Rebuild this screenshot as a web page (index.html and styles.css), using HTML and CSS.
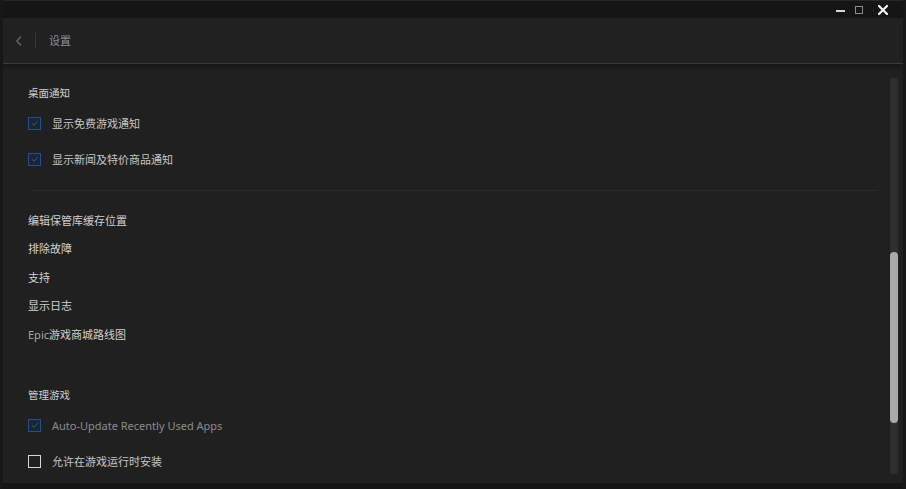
FILE: index.html
```html
<!DOCTYPE html>
<html lang="zh-CN">
<head>
<meta charset="utf-8">
<title>设置</title>
<link rel="stylesheet" href="styles.css">
</head>
<body>
<div class="window">
  <div class="titlebar">
    <div class="controls">
      <span class="ctl-min"></span>
      <span class="ctl-max"></span>
      <svg class="ctl-close" width="10" height="10" viewBox="0 0 10 10"><path d="M1 1L9 9M9 1L1 9" stroke="#f2f2f2" stroke-width="2.2" stroke-linecap="square"/></svg>
    </div>
  </div>
  <div class="header">
    <svg class="back" width="8" height="12" viewBox="0 0 8 12"><path d="M6 1.5L1.8 6L6 10.5" fill="none" stroke="#6c6c6c" stroke-width="1.2"/></svg>
    <span class="vdiv"></span>
    <span class="page-title">设置</span>
  </div>
  <div class="main">
    <div class="content">
      <div class="section-title">桌面通知</div>
      <div class="cb-row">
        <span class="cb checked"><svg width="8" height="8" viewBox="0 0 8 8"><path d="M1 4.3L3 6.2L7 1.8" fill="none" stroke="#3a5677" stroke-width="1"/></svg></span>
        <span class="cb-label">显示免费游戏通知</span>
      </div>
      <div class="cb-row">
        <span class="cb checked"><svg width="8" height="8" viewBox="0 0 8 8"><path d="M1 4.3L3 6.2L7 1.8" fill="none" stroke="#3a5677" stroke-width="1"/></svg></span>
        <span class="cb-label">显示新闻及特价商品通知</span>
      </div>
      <div class="hr"></div>
      <div class="links">
        <div class="link">编辑保管库缓存位置</div>
        <div class="link">排除故障</div>
        <div class="link">支持</div>
        <div class="link">显示日志</div>
        <div class="link"><span class="latin">Epic</span>游戏商城路线图</div>
      </div>
      <div class="section-title second">管理游戏</div>
      <div class="cb-row">
        <span class="cb checked"><svg width="8" height="8" viewBox="0 0 8 8"><path d="M1 4.3L3 6.2L7 1.8" fill="none" stroke="#3a5677" stroke-width="1"/></svg></span>
        <span class="cb-label disabled">Auto-Update Recently Used Apps</span>
      </div>
      <div class="cb-row">
        <span class="cb unchecked"></span>
        <span class="cb-label">允许在游戏运行时安装</span>
      </div>
    </div>
    <div class="scroll">
      <div class="track">
        <div class="thumb"></div>
      </div>
    </div>
  </div>
  <div class="bottom"></div>
</div>
</body>
</html>
```

FILE: styles.css
```css
* { box-sizing: border-box; }
html, body {
  margin: 0;
  padding: 0;
  background: #151515;
}
body {
  font-family: "Noto Sans", "Noto Sans CJK SC", sans-serif;
  font-size: 11px;
}
.window {
  width: 906px;
  height: 489px;
  display: flex;
  flex-direction: column;
  background: #202020;
  border-left: 3px solid #171717;
  border-right: 3px solid #171717;
  overflow: hidden;
}
.titlebar {
  height: 18px;
  flex: none;
  background: #151515;
  border-top: 1px solid #262626;
  display: flex;
  justify-content: flex-end;
  align-items: center;
}
.controls {
  display: flex;
  align-items: center;
  margin-right: 15px;
}
.ctl-min {
  width: 9px;
  height: 2px;
  background: #d8d8d8;
  margin-top: 2px;
}
.ctl-max {
  width: 8px;
  height: 8px;
  border: 1.5px solid #8c8c8c;
  margin-left: 10px;
}
.ctl-close {
  margin-left: 15px;
}
.header {
  height: 46px;
  flex: none;
  background: #212121;
  border-bottom: 1px solid #3a3a3a;
  display: flex;
  align-items: center;
  padding-left: 12px;
  position: relative;
  z-index: 1;
  box-shadow: 0 3px 5px rgba(0, 0, 0, 0.35);
}
.back { display: block; }
.vdiv {
  width: 1px;
  height: 16px;
  background: #363636;
  margin-left: 12px;
}
.page-title {
  color: #8e8e8e;
  margin-left: 13px;
  line-height: 16px;
}
.main {
  flex: 1;
  display: flex;
  min-height: 0;
}
.content {
  flex: 1;
  padding: 20px 12px 0 25px;
}
.section-title {
  line-height: 18px;
  color: #cfcfcf;
  font-size: 10.5px;
}
.section-title.second {
  margin-top: 37px;
}
.cb-row {
  height: 36px;
  display: flex;
  align-items: center;
}
.section-title + .cb-row { margin-top: 3px; }
.cb {
  width: 13px;
  height: 13px;
  flex: none;
  display: flex;
  align-items: center;
  justify-content: center;
}
.cb.checked {
  border: 1.5px solid #22508a;
  background: #1c2633;
}
.cb.unchecked {
  border: 1.5px solid #d6d6d6;
}
.cb-label {
  margin-left: 11px;
  color: #c6c6c6;
}
.cb-label.disabled {
  color: #8c8c8c;
}
.hr {
  height: 1px;
  background: #2b2b2b;
  margin: 13px 0 16px 4px;
}
.link {
  line-height: 28.4px;
  color: #d0d0d0;
}
.latin { color: #a8a8a8; }
.scroll {
  width: 13px;
  flex: none;
  padding: 14px 5px 9px 0;
}
.track {
  height: 100%;
  background: #2f2f2f;
  border-radius: 3px;
  padding-top: 174px;
}
.thumb {
  height: 171px;
  background: #aaaaaa;
  border-radius: 4px;
}
.bottom {
  height: 6px;
  flex: none;
  background: #151515;
}
```
